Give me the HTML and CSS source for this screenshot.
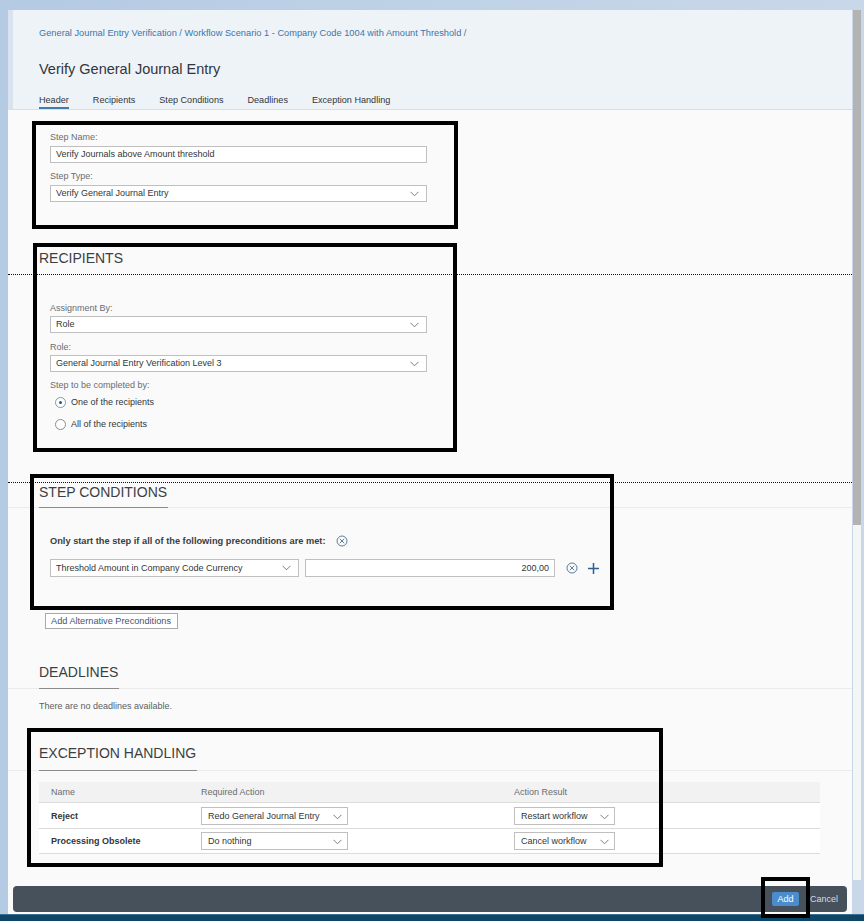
FILE: index.html
```html
<!DOCTYPE html>
<html lang="en">
<head>
	<meta charset="UTF-8">
	<title>Verify General Journal Entry</title>
	<link rel="stylesheet" href="styles.css">
</head>
<body>
	<div class="page">
		<div class="shell">
			<div class="dialog">
				<div class="head">
					<div class="crumbs">General Journal Entry Verification / Workflow Scenario 1 - Company Code 1004 with Amount Threshold /</div>
					<div class="title">Verify General Journal Entry</div>
					<ul class="tabs">
						<li class="sel">Header</li>
						<li>Recipients</li>
						<li>Step Conditions</li>
						<li>Deadlines</li>
						<li>Exception Handling</li>
					</ul>
				</div>

				<div class="content">
					<!-- header form -->
					<div class="form">
						<div class="lbl">Step Name:</div>
						<div class="field">Verify Journals above Amount threshold</div>
						<div class="lbl gap">Step Type:</div>
						<div class="field select">Verify General Journal Entry
							<svg class="chev" width="9" height="6" viewBox="0 0 9 6"><path d="M0.5 0.8 L4.5 4.8 L8.5 0.8"/></svg>
						</div>
					</div>

					<!-- recipients -->
					<div class="sec-title plain rcp">RECIPIENTS</div>
					<div class="dots"></div>
					<div class="form rcp-form">
						<div class="lbl">Assignment By:</div>
						<div class="field select tight">Role
							<svg class="chev" width="9" height="6" viewBox="0 0 9 6"><path d="M0.5 0.8 L4.5 4.8 L8.5 0.8"/></svg>
						</div>
						<div class="lbl gap1">Role:</div>
						<div class="field select tight">General Journal Entry Verification Level 3
							<svg class="chev" width="9" height="6" viewBox="0 0 9 6"><path d="M0.5 0.8 L4.5 4.8 L8.5 0.8"/></svg>
						</div>
						<div class="lbl gap">Step to be completed by:</div>
						<div class="radio on"><span class="dot"></span>One of the recipients</div>
						<div class="radio"><span class="dot"></span>All of the recipients</div>
					</div>

					<!-- step conditions -->
					<div class="dots dots2"></div>
					<div class="sec-head sc"><span>STEP CONDITIONS</span></div>
					<div class="form cond">
						<div class="pre">Only start the step if all of the following preconditions are met:
							<svg class="xc" width="12" height="12" viewBox="0 0 12 12"><circle cx="6" cy="6" r="5"/><path d="M3.8 3.8 L8.2 8.2 M8.2 3.8 L3.8 8.2"/></svg>
						</div>
						<div class="cond-row">
							<div class="field select sel-cond">Threshold Amount in Company Code Currency
								<svg class="chev" width="9" height="6" viewBox="0 0 9 6"><path d="M0.5 0.8 L4.5 4.8 L8.5 0.8"/></svg>
							</div>
							<div class="field amount">200,00</div>
							<svg class="xc" width="12" height="12" viewBox="0 0 12 12"><circle cx="6" cy="6" r="5"/><path d="M3.8 3.8 L8.2 8.2 M8.2 3.8 L3.8 8.2"/></svg>
							<svg class="plus" width="11" height="11" viewBox="0 0 11 11"><path d="M5.5 0 V11 M0 5.5 H11"/></svg>
						</div>
						<div class="alt-btn">Add Alternative Preconditions</div>
					</div>

					<!-- deadlines -->
					<div class="sec-head dl"><span>DEADLINES</span></div>
					<div class="empty">There are no deadlines available.</div>

					<!-- exception handling -->
					<div class="sec-head ex"><span>EXCEPTION HANDLING</span></div>
					<div class="tbl">
						<div class="tr th">
							<div class="c1">Name</div>
							<div>Required Action</div>
							<div>Action Result</div>
						</div>
						<div class="tr">
							<div class="c1 nm">Reject</div>
							<div><div class="field select tsel w1">Redo General Journal Entry
								<svg class="chev" width="9" height="6" viewBox="0 0 9 6"><path d="M0.5 0.8 L4.5 4.8 L8.5 0.8"/></svg></div></div>
							<div><div class="field select tsel w2">Restart workflow
								<svg class="chev" width="9" height="6" viewBox="0 0 9 6"><path d="M0.5 0.8 L4.5 4.8 L8.5 0.8"/></svg></div></div>
						</div>
						<div class="tr">
							<div class="c1 nm">Processing Obsolete</div>
							<div><div class="field select tsel w1">Do nothing
								<svg class="chev" width="9" height="6" viewBox="0 0 9 6"><path d="M0.5 0.8 L4.5 4.8 L8.5 0.8"/></svg></div></div>
							<div><div class="field select tsel w2">Cancel workflow
								<svg class="chev" width="9" height="6" viewBox="0 0 9 6"><path d="M0.5 0.8 L4.5 4.8 L8.5 0.8"/></svg></div></div>
						</div>
					</div>
				</div>

				<div class="foot-wrap">
					<div class="footer">
						<span class="add">Add</span>
						<span class="cancel">Cancel</span>
					</div>
				</div>
			</div>
			<div class="scroll"><div class="thumb"></div></div>
		</div>
		<div class="strip"></div>

		<!-- annotation frames -->
		<div class="mark m1"></div>
		<div class="mark m2"></div>
		<div class="mark m3"></div>
		<div class="mark m4"></div>
		<div class="mark m5"></div>
	</div>
</body>
</html>
```

FILE: styles.css
```css
*{
	margin:0;
	padding:0;
	list-style:none;
	box-sizing:border-box;
}
body{
	background:#c9d7e7;
	font-family:"Liberation Sans", Arial, sans-serif;
	color:#32363a;
	overflow:hidden;
}
.page{
	position:relative;
	width:864px;
	height:921px;
	background:linear-gradient(90deg,#b4cae3 0,#bdd0e6 40%,#c9d8e8 100%);
}
.shell{
	display:flex;
	padding:10px 0 0 8px;
	height:914px;
}
.dialog{
	width:844px;
	display:flex;
	flex-direction:column;
	background:#fafafa;
}
.scroll{
	width:8px;
	margin-left:1px;
	background:#f3f5f7;
	height:870px;
}
.thumb{
	height:515px;
	background:#b3b3b3;
}
.strip{
	height:7px;
	background:#0e4668;
	border-top:1px solid #3e6f8e;
}

/*---------------- head ----------------*/
.head{
	height:100px;
	flex:none;
	background:#eef3f8;
	border-left:5px solid #d9e3ee;
	border-bottom:1px solid #d6dfe8;
	padding:17px 0 0 26px;
}
.crumbs{
	font-size:9.25px;
	line-height:12px;
	color:#3a75ab;
}
.title{
	margin-top:21px;
	font-size:14.5px;
	line-height:18px;
	color:#32363a;
}
.tabs{
	display:flex;
	gap:24px;
	margin-top:16px;
}
.tabs li{
	font-size:9.1px;
	line-height:12px;
	padding-bottom:1px;
	border-bottom:2px solid transparent;
	color:#32363a;
}
.tabs li.sel{
	border-bottom-color:#427cac;
}

/*---------------- content ----------------*/
.content{
	flex:1;
	overflow:hidden;
	padding-top:21px;
}
.form{
	padding-left:42px;
	width:419px;
}
.lbl{
	font-size:9px;
	line-height:12px;
	color:#6a6d70;
}
.lbl.gap{
	margin-top:7px;
}
.lbl.gap1{
	margin-top:8px;
}
.field{
	position:relative;
	height:17px;
	margin-top:3px;
	background:#fff;
	border:1px solid #bfbfbf;
	font-size:9px;
	line-height:15px;
	padding-left:5px;
	color:#32363a;
	white-space:nowrap;
}
.field.tight{
	margin-top:2px;
}
.chev{
	position:absolute;
	right:7px;
	top:5px;
}
.chev path{
	fill:none;
	stroke:#6a6d70;
	stroke-width:0.9;
}

.sec-title{
	font-size:14px;
	line-height:16px;
	padding-left:31px;
	color:#3c3f42;
}
.rcp{
	margin-top:48px;
}
.dots{
	margin-top:8px;
	border-top:1px dotted #111;
}
.dots2{
	margin-top:47px;
}
.rcp-form{
	padding-top:27px;
}
.radio{
	display:flex;
	align-items:center;
	height:22px;
	padding-left:5px;
	font-size:9px;
	color:#32363a;
}
.radio .dot{
	width:11px;
	height:11px;
	border:1px solid #8c8c8c;
	border-radius:50%;
	background:#fff;
	margin-right:5px;
	position:relative;
}
.radio.on .dot{
	border-color:#7f97ad;
}
.radio.on .dot:after{
	content:"";
	position:absolute;
	left:3px;
	top:3px;
	width:3px;
	height:3px;
	border-radius:50%;
	background:#31557a;
}

.sec-head{
	padding-left:31px;
	border-bottom:1px solid #ebebeb;
}
.sec-head span{
	display:inline-block;
	font-size:14px;
	line-height:16px;
	padding-bottom:7px;
	border-bottom:1px solid #8c8c8c;
	margin-bottom:-1px;
	color:#3c3f42;
	padding-right:1px;
}
.dl{
	margin-top:34px;
}
.dl span{
	padding-bottom:8px;
}
.ex span{
	padding-bottom:9px;
}
.ex{
	margin-top:32px;
}

.cond{
	width:auto;
	padding-top:27px;
}
.pre{
	display:flex;
	align-items:center;
	font-size:9.25px;
	line-height:12px;
	font-weight:bold;
	color:#3a3d40;
}
.pre .xc{
	margin-left:11px;
}
.xc circle,.xc path{
	fill:none;
	stroke:#4d6f92;
	stroke-width:0.9;
}
.cond-row{
	display:flex;
	align-items:center;
	margin-top:12px;
	height:18px;
}
.cond-row .field{
	margin-top:0;
	height:18px;
	line-height:16px;
}
.sel-cond{
	width:249px;
}
.amount{
	width:250px;
	margin-left:6px;
	text-align:right;
	padding-right:5px;
}
.cond-row .xc{
	margin-left:11px;
}
.plus{
	margin-left:10px;
}
.plus path{
	stroke:#2f5f8f;
	stroke-width:1.5;
}
.alt-btn{
	display:inline-block;
	margin:36px 0 0 -5px;
	height:16px;
	padding:0 6px 0 5px;
	border:1px solid #a9a9a9;
	background:#fff;
	font-size:9.2px;
	line-height:14px;
	color:#3b5875;
}
.empty{
	margin-top:11px;
	padding-left:31px;
	font-size:9px;
	line-height:12px;
	color:#5a5e62;
}

/*---------------- table ----------------*/
.tbl{
	margin:11px 0 0 31px;
	width:781px;
}
.tr{
	display:grid;
	grid-template-columns:162px 313px 1fr;
	align-items:center;
	height:26px;
	background:#fff;
	border-top:1px solid #dcdcdc;
	font-size:9px;
}
.tr.th{
	height:20px;
	background:#f2f2f2;
	border-top:none;
	color:#6a6d70;
}
.tr:last-child{
	border-bottom:1px solid #dcdcdc;
}
.c1{
	padding-left:12px;
}
.nm{
	font-weight:bold;
	color:#32363a;
}
.tsel{
	margin-top:0;
	height:18px;
	line-height:16px;
	padding-left:6px;
}
.tsel .chev{
	right:5px;
	top:6px;
}
.w1{
	width:147px;
}
.w2{
	width:101px;
}

/*---------------- footer ----------------*/
.foot-wrap{
	flex:none;
	padding:0 5px 2px 5px;
}
.footer{
	height:26px;
	background:#47515b;
	border-radius:4px;
	display:flex;
	align-items:center;
	justify-content:flex-end;
	padding-right:9px;
}
.add{
	display:inline-block;
	width:27px;
	height:14px;
	background:#4b8dcc;
	border-radius:2px;
	color:#fff;
	font-size:9px;
	line-height:14px;
	text-align:center;
	margin-right:11px;
}
.cancel{
	font-size:9px;
	color:#d3dbe3;
}

/*---------------- annotation frames ----------------*/
.mark{
	position:absolute;
	border:4px solid #000;
}
.m1{
	left:32px;
	top:121px;
	width:426px;
	height:108px;
}
.m2{
	left:33px;
	top:243px;
	width:424px;
	height:209px;
}
.m3{
	left:30px;
	top:474px;
	width:584px;
	height:136px;
}
.m4{
	left:27px;
	top:728px;
	width:636px;
	height:139px;
}
.m5{
	left:761px;
	top:877px;
	width:49px;
	height:41px;
}
```
